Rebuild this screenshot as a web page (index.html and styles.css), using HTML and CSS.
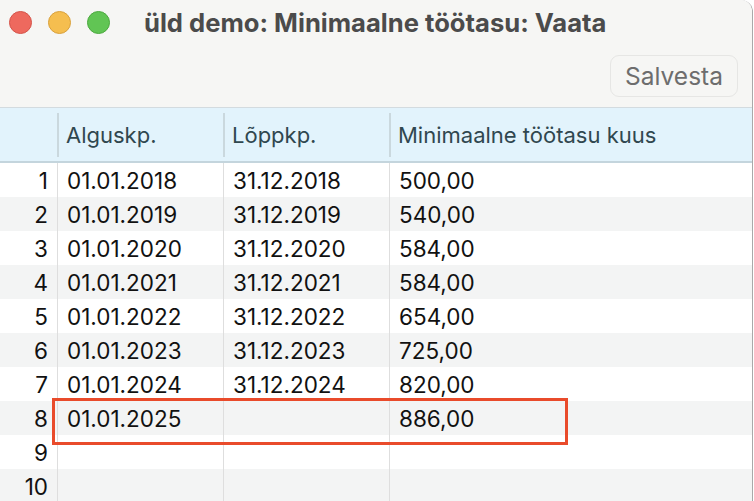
FILE: index.html
```html
<!DOCTYPE html>
<html lang="et">
<head>
    <meta charset="UTF-8">
    <title>üld demo: Minimaalne töötasu: Vaata</title>
    <link rel="stylesheet" href="styles.css">
</head>
<body>
    <div class="window">
        <div class="titlebar">
            <div class="lights">
                <span class="light red"></span>
                <span class="light yellow"></span>
                <span class="light green"></span>
            </div>
            <h1 class="title">üld demo: Minimaalne töötasu: Vaata</h1>
        </div>

        <div class="toolbar">
            <button class="save-btn">Salvesta</button>
        </div>

        <div class="grid">
            <div class="head-row">
                <div class="hcell num"></div>
                <div class="hcell">Alguskp.</div>
                <div class="hcell">Lõppkp.</div>
                <div class="hcell">Minimaalne töötasu kuus</div>
            </div>

            <div class="row"><div class="cell num">1</div><div class="cell">01.01.2018</div><div class="cell">31.12.2018</div><div class="cell">500,00</div></div>
            <div class="row"><div class="cell num">2</div><div class="cell">01.01.2019</div><div class="cell">31.12.2019</div><div class="cell">540,00</div></div>
            <div class="row"><div class="cell num">3</div><div class="cell">01.01.2020</div><div class="cell">31.12.2020</div><div class="cell">584,00</div></div>
            <div class="row"><div class="cell num">4</div><div class="cell">01.01.2021</div><div class="cell">31.12.2021</div><div class="cell">584,00</div></div>
            <div class="row"><div class="cell num">5</div><div class="cell">01.01.2022</div><div class="cell">31.12.2022</div><div class="cell">654,00</div></div>
            <div class="row"><div class="cell num">6</div><div class="cell">01.01.2023</div><div class="cell">31.12.2023</div><div class="cell">725,00</div></div>
            <div class="row"><div class="cell num">7</div><div class="cell">01.01.2024</div><div class="cell">31.12.2024</div><div class="cell">820,00</div></div>
            <div class="row marked"><div class="cell num">8</div><div class="cell">01.01.2025</div><div class="cell"></div><div class="cell">886,00</div></div>
            <div class="row"><div class="cell num">9</div><div class="cell"></div><div class="cell"></div><div class="cell"></div></div>
            <div class="row"><div class="cell num">10</div><div class="cell"></div><div class="cell"></div><div class="cell"></div></div>
        </div>
    </div>
</body>
</html>
```

FILE: styles.css
```css
* {
    margin: 0;
    padding: 0;
    box-sizing: border-box;
}

body {
    font-family: Inter, "Liberation Sans", sans-serif;
    background-color: #ffffff;
    width: 754px;
    height: 501px;
    overflow: hidden;
}

.window {
    width: 753px;
    height: 501px;
    background-color: #ffffff;
    border-right: 1px solid #a9a9a9;
    border-top-right-radius: 12px;
    overflow: hidden;
}

/* title bar */
.titlebar {
    height: 44px;
    display: flex;
    align-items: center;
    background-color: #f6f6f4;
    padding-left: 9px;
}

.lights {
    display: flex;
    gap: 16px;
}

.light {
    width: 23px;
    height: 23px;
    border-radius: 50%;
}

.red {
    background-color: #ee695e;
    border: 1px solid #d5544a;
}

.yellow {
    background-color: #f5be4f;
    border: 1px solid #d9a13c;
}

.green {
    background-color: #61c554;
    border: 1px solid #4ca93f;
}

.title {
    margin-left: 34px;
    font-size: 25.6px;
    font-weight: 700;
    color: #4b4b4b;
}

/* toolbar */
.toolbar {
    height: 64px;
    display: flex;
    justify-content: flex-end;
    align-items: center;
    padding-right: 14px;
    background-color: #f6f6f4;
    border-bottom: 1px solid #d3dbdf;
}

.save-btn {
    font-family: inherit;
    font-size: 24.5px;
    color: #6d6d6d;
    background-color: #f6f6f4;
    border: 1.5px solid #e6e6e4;
    border-radius: 9px;
    width: 128px;
    height: 42px;
}

/* grid */
.head-row,
.row {
    display: grid;
    grid-template-columns: 57px 166px 166px 1fr;
}

.head-row {
    height: 55px;
    background-color: #e2f3fc;
    border-bottom: 2px solid #c4d5dd;
}

.hcell {
    display: flex;
    align-items: center;
    padding-left: 7px;
    font-size: 22px;
    color: #30474f;
    border-left: 2px solid #cad8de;
    margin: 5px 0 4px;
}

.hcell.num {
    border-left: none;
}

.row {
    height: 34px;
    background-color: #ffffff;
    position: relative;
}

.row:nth-child(odd) {
    background-color: #f3f4f4;
}

.cell {
    display: flex;
    align-items: center;
    padding-left: 9px;
    font-size: 22.5px;
    color: #111111;
    border-left: 1px solid #dedede;
}

.cell.num {
    justify-content: flex-end;
    padding-left: 0;
    padding-right: 9px;
    border-left: none;
}

.marked {
    z-index: 1;
}

.marked::after {
    content: "";
    position: absolute;
    left: 52px;
    top: -3px;
    width: 510px;
    height: 41px;
    border: 3.5px solid #e94b2b;
}
```
